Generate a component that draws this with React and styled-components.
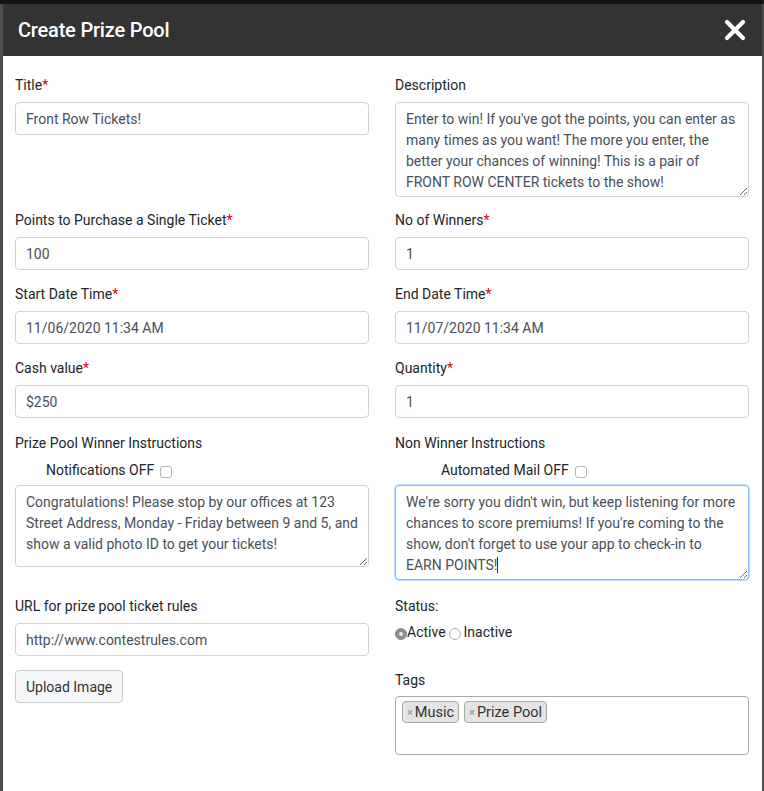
import React from "react";
import styled, { createGlobalStyle } from "styled-components";

const Global = createGlobalStyle`
  html, body { margin: 0; padding: 0; }
  body {
    background: #4a4a4a;
    font-family: Roboto, "Noto Sans", "Liberation Sans", sans-serif;
    width: 764px;
    height: 791px;
    overflow: hidden;
  }
  * { box-sizing: border-box; }
`;

const Page = styled.div`
  width: 764px;
  height: 791px;
  background: linear-gradient(#141414, #141414) top / 100% 4px no-repeat, #4d4d4d;
  padding: 4px 2px 0 3px;
`;

const Modal = styled.div`
  width: 759px;
  height: 787px;
  background: #fff;
`;

const Header = styled.div`
  height: 52px;
  background: #333333;
  display: flex;
  align-items: center;
  justify-content: space-between;
  padding: 0 15px 0 15px;
`;

const Title = styled.h2`
  margin: 0;
  color: #fff;
  font-size: 20px;
  font-weight: 500;
  letter-spacing: -0.2px;
`;

const Close = styled.button`
  border: 0;
  background: none;
  padding: 0;
  width: 24px;
  height: 24px;
  display: flex;
  align-items: center;
  justify-content: center;
  cursor: pointer;
`;

const Body = styled.div`
  padding: 19px 13px 0 12px;
  display: grid;
  grid-template-columns: 354px 354px;
  column-gap: 26px;
  align-items: start;
`;

const Group = styled.div`
  display: flex;
  flex-direction: column;
  margin-bottom: ${(p) => p.$mb ?? 14}px;
`;

const Label = styled.label`
  font-size: 14px;
  line-height: 21px;
  color: #212529;
  margin-bottom: ${(p) => p.$mb ?? 6}px;
`;

const Star = styled.span`
  color: #e3001b;
`;

const Input = styled.input`
  height: 33px;
  width: 100%;
  border: 1px solid #ced4da;
  border-radius: 4px;
  padding: 0 10px;
  font-family: inherit;
  font-size: 14px;
  color: #495057;
  background: #fff;
  outline: none;
`;

const Area = styled.textarea`
  width: 100%;
  height: ${(p) => p.$h}px;
  border: 1px solid ${(p) => (p.$focus ? "#80bdff" : "#ced4da")};
  box-shadow: ${(p) => (p.$focus ? "0 0 0 1px rgba(0,123,255,.25)" : "none")};
  border-radius: 4px;
  padding: 6px 10px;
  font-family: inherit;
  font-size: 14px;
  line-height: 21px;
  color: #495057;
  background: #fff;
  outline: none;
  resize: vertical;
  overflow: hidden;
`;

const CheckRow = styled.div`
  display: flex;
  align-items: center;
  gap: 6px;
  padding-left: ${(p) => p.$indent}px;
  font-size: 14px;
  line-height: 21px;
  color: #212529;
  margin-bottom: 4px;
  margin-top: 0;
`;

const Box = styled.span`
  width: 12px;
  height: 12px;
  border: 1px solid #b5b5b5;
  border-radius: 3px;
  background: #fff;
  margin-top: 3px;
`;

const Button = styled.button`
  align-self: flex-start;
  height: 33px;
  margin-top: 14px;
  padding: 0 10px;
  border: 1px solid #ccc;
  border-radius: 4px;
  background: #f6f7f9;
  font-family: inherit;
  font-size: 14px;
  color: #333;
`;

const RadioRow = styled.div`
  display: flex;
  align-items: center;
  font-size: 14px;
  line-height: 21px;
  color: #212529;
  margin-bottom: 27px;
  margin-top: -1px;
`;

const Radio = styled.span`
  width: 12px;
  height: 12px;
  border-radius: 50%;
  display: inline-flex;
  align-items: center;
  justify-content: center;
  margin: 2px ${(p) => (p.$on ? 0 : 3)}px 0 ${(p) => (p.$on ? 0 : 3)}px;
  background: ${(p) => (p.$on ? "#8d8d8d" : "#fff")};
  border: 1px solid ${(p) => (p.$on ? "#8d8d8d" : "#b0b0b0")};
  &::after {
    content: "";
    width: 4px;
    height: 4px;
    border-radius: 50%;
    background: ${(p) => (p.$on ? "#e8e8e8" : "transparent")};
  }
`;

const TagBox = styled.div`
  height: 59px;
  border: 1px solid #aaa;
  border-radius: 4px;
  padding: 4px 6px;
  display: flex;
  align-items: flex-start;
  gap: 5px;
`;

const Chip = styled.span`
  display: inline-flex;
  align-items: center;
  height: 22px;
  padding: 0 4px 0 4px;
  background: #e4e4e4;
  border: 1px solid #aaa;
  border-radius: 4px;
  font-size: 14.5px;
  color: #333;
`;

const ChipX = styled.span`
  color: #a0a0a0;
  font-weight: 700;
  font-size: 11px;
  margin-right: 2px;
`;

const Caret = styled.span`
  display: inline-block;
  width: 1px;
  height: 16px;
  background: #333;
  vertical-align: -3px;
`;

const Overlay = styled.div`
  position: relative;
`;

const FakeText = styled.div`
  position: absolute;
  left: 11px;
  top: 7px;
  font-size: 14px;
  line-height: 21px;
  color: transparent;
  pointer-events: none;
  white-space: pre;
`;

const Req = ({ children }) => (
  <Label>
    {children}
    <Star>*</Star>
  </Label>
);

export default function App() {
  return (
    <>
      <Global />
      <Page>
        <Modal>
          <Header>
            <Title>Create Prize Pool</Title>
            <Close aria-label="close">
              <svg width="22" height="22" viewBox="0 0 22 22">
                <path d="M3 3 L19 19 M19 3 L3 19" stroke="#fff" strokeWidth="4.2" strokeLinecap="round" />
              </svg>
            </Close>
          </Header>
          <Body>
            <Group $mb={14}>
              <Req>Title</Req>
              <Input readOnly value="Front Row Tickets!" />
            </Group>
            <Group $mb={13}>
              <Label>Description</Label>
              <Area
                $h={95}
                readOnly
                value="Enter to win! If you've got the points, you can enter as many times as you want! The more you enter, the better your chances of winning! This is a pair of FRONT ROW CENTER tickets to the show!"
              />
            </Group>

            <Group>
              <Req>Points to Purchase a Single Ticket</Req>
              <Input readOnly value="100" />
            </Group>
            <Group>
              <Req>No of Winners</Req>
              <Input readOnly value="1" />
            </Group>

            <Group>
              <Req>Start Date Time</Req>
              <Input readOnly value="11/06/2020 11:34 AM" />
            </Group>
            <Group>
              <Req>End Date Time</Req>
              <Input readOnly value="11/07/2020 11:34 AM" />
            </Group>

            <Group $mb={15}>
              <Req>Cash value</Req>
              <Input readOnly value="$250" />
            </Group>
            <Group $mb={15}>
              <Req>Quantity</Req>
              <Input readOnly value="1" />
            </Group>

            <Group $mb={23}>
              <Label>Prize Pool Winner Instructions</Label>
              <CheckRow $indent={31}>
                Notifications OFF <Box />
              </CheckRow>
              <Area
                $h={82}
                readOnly
                value="Congratulations! Please stop by our offices at 123 Street Address, Monday - Friday between 9 and 5, and show a valid photo ID to get your tickets!"
              />
            </Group>
            <Group $mb={12}>
              <Label>Non Winner Instructions</Label>
              <CheckRow $indent={46}>
                Automated Mail OFF <Box />
              </CheckRow>
              <Overlay>
                <Area
                  $h={95}
                  $focus
                  readOnly
                  value="We're sorry you didn't win, but keep listening for more chances to score premiums! If you're coming to the show, don't forget to use your app to check-in to EARN POINTS!"
                />
                <FakeText>
                  {"\n\n\nEARN POINTS!"}
                  <Caret />
                </FakeText>
              </Overlay>
            </Group>

            <Group $mb={0}>
              <Label>URL for prize pool ticket rules</Label>
              <Input readOnly value="http://www.contestrules.com" />
              <Button>Upload Image</Button>
            </Group>
            <Group $mb={0}>
              <Label>Status:</Label>
              <RadioRow>
                <Radio $on />
                Active
                <Radio />
                Inactive
              </RadioRow>
              <Label $mb={5}>Tags</Label>
              <TagBox>
                <Chip>
                  <ChipX>×</ChipX>Music
                </Chip>
                <Chip>
                  <ChipX>×</ChipX>Prize Pool
                </Chip>
              </TagBox>
            </Group>
          </Body>
        </Modal>
      </Page>
    </>
  );
}
